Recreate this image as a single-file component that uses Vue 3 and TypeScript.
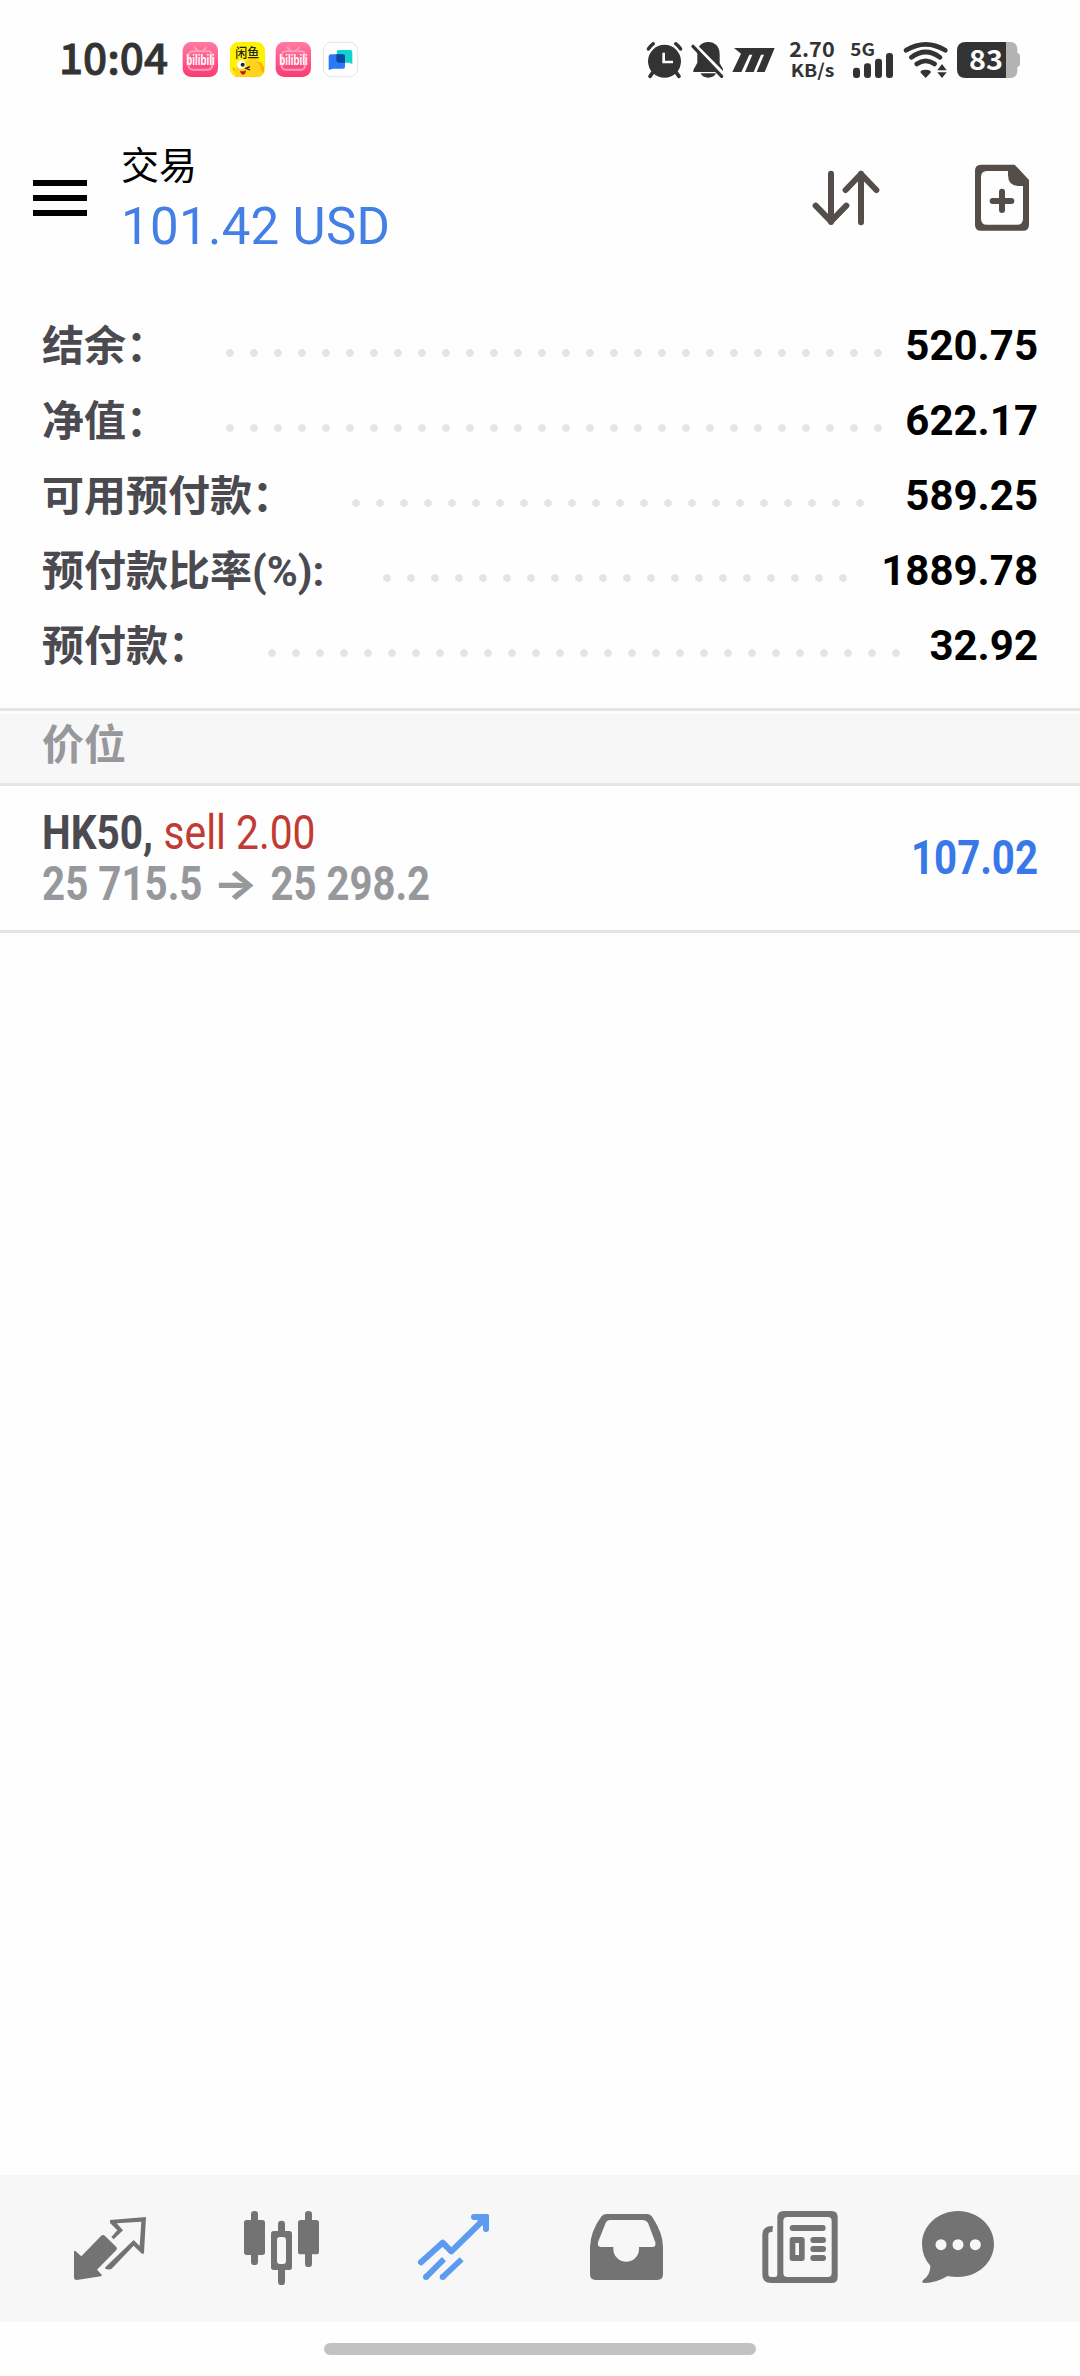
<script setup lang="ts">
interface AccountRow {
  label: string
  value: string
  dotsStart: number
  dots: number
}

const rows: AccountRow[] = [
  { label: '结余：', value: '520.75', dotsStart: 218.4, dots: 28 },
  { label: '净值：', value: '622.17', dotsStart: 218.4, dots: 28 },
  { label: '可用预付款：', value: '589.25', dotsStart: 344.1, dots: 22 },
  { label: '预付款比率(%):', value: '1889.78', dotsStart: 375.2, dots: 20 },
  { label: '预付款：', value: '32.92', dotsStart: 260.2, dots: 27 },
]
</script>

<template>
  <div class="screen">
    <div class="status">
      <svg class="clock" width="120" height="80" viewBox="0 0 120 80">
        <text x="19" y="54.4" textLength="109" lengthAdjust="spacingAndGlyphs" class="time">10:04</text>
      </svg>
      <svg class="apps" width="180" height="80" viewBox="420 0 540 240">
        <defs>
          <linearGradient id="pink" x1="0" y1="0" x2="0" y2="1">
            <stop offset="0" stop-color="#ff7ba2" />
            <stop offset="1" stop-color="#fb3a74" />
          </linearGradient>
        </defs>
        <g v-for="x in [428, 707]" :key="x" :transform="`translate(${x} 66)`">
          <rect width="106" height="105" rx="25" fill="url(#pink)" />
          <g fill="none" stroke="#ff9dba" stroke-width="6" stroke-linecap="round">
            <rect x="18" y="28" width="70" height="55" rx="12" />
            <path d="M36 17l10 10M70 17l-10 10" />
          </g>
          <text x="11" y="70" textLength="85" lengthAdjust="spacingAndGlyphs" class="bili">bilibili</text>
        </g>
        <rect x="570" y="66" width="105" height="105" rx="25" fill="#fff200" />
        <path d="M584 171c-2-30 14-46 38-48 8-12 30-14 36 2 10 4 8 12 14 22v5c0 12-10 19-22 19z" fill="#ffd21c" />
        <path d="M650 127q12 5 14 19t8 10v-14q-8-20-22-15zM578 143q8-2 8 9-8 2-8-9z" fill="#ffae00" />
        <circle cx="604" cy="134" r="13" fill="#fff" />
        <circle cx="608" cy="134" r="6" fill="#222" />
        <path d="M630 140l-12 5 12 5" fill="none" stroke="#222" stroke-width="4" />
        <path d="M600 152q10 4 18-1-1 14-10 13-7-2-8-12z" fill="#b81c16" />
        <text x="586" y="111" textLength="72" lengthAdjust="spacingAndGlyphs" class="fish">闲鱼</text>
        <rect x="850" y="67" width="103" height="103" rx="25" fill="#fff" stroke="#dedede" stroke-width="2.5" />
        <path d="M895 90h36q6 0 6 6v36l-10-4h-26q-10 0-10-8V94q0-4 4-4z" fill="#0fd3d3" />
        <path d="M873 103h36q6 0 6 6v31q0 6-6 6h-30l-13 4v-41q0-6 7-6z" fill="#2b79fb" />
        <path d="M889 103h20q6 0 6 6v19h-16q-10 0-10-8z" fill="#0b469f" />
      </svg>
      <svg class="system" width="400" height="80" viewBox="0 0 1200 240">
        <g fill="#333">
          <path d="M68 158l-8 11M139 158l8 11" stroke="#333" stroke-width="11" stroke-linecap="round" />
          <circle cx="103.500" cy="124" r="49.500" />
          <path d="M55 87q6-9 15-16M152 87q-6-9-15-16" fill="none" stroke="#333" stroke-width="10" stroke-linecap="round" />
          <path d="M101 98v28h28" fill="none" stroke="#fefefe" stroke-width="8" />
          <path d="M208 78q10-12 27-12 34 2 34 39v25l10 17v9H190v-6l12-22V98z" />
          <path d="M212 160h46q-6 13-23 13t-23-13z" />
          <path d="M192 72L284 165" stroke="#fefefe" stroke-width="10" />
          <path d="M189 79L275 169" stroke="#333" stroke-width="10" stroke-linecap="round" />
          <path d="M312 84H434L404 156H380L402 104H393L371 156H345L367 104H358L334 156H307L333 101Z" />
          <rect x="669" y="143" width="21" height="31" rx="9" />
          <rect x="702" y="130" width="21" height="44" rx="9" />
          <rect x="735" y="116" width="21" height="58" rx="9" />
          <rect x="768" y="99" width="21" height="75" rx="9" />
          <g fill="none" stroke="#333" stroke-width="14" stroke-linecap="round">
            <path d="M828 91Q887 55 946 91" />
            <path d="M844 112Q887 80 930 112" />
            <path d="M860 132Q887 113 914 132" />
          </g>
          <path d="M872 153Q887 145 902 153V158L887 174L872 158ZM936 132l14 19H922zM936 174l14-17H922z" />
          <path d="M1128 66h13q21 0 21 23v10q8 2 8 8v26q0 6-8 8v10q0 23-21 23h-13z" fill="#b3b3b3" />
          <path d="M1128 66V174H1007q-26 0-26-26V92q0-26 26-26z" />
        </g>
        <text x="478" y="112" textLength="136" lengthAdjust="spacingAndGlyphs" class="speed">2.70</text>
        <text x="482" y="170" textLength="131" lengthAdjust="spacingAndGlyphs" class="unit">KB/s</text>
        <text x="661" y="107" textLength="74" lengthAdjust="spacingAndGlyphs" class="net">5G</text>
        <text x="1017" y="150" textLength="102" lengthAdjust="spacingAndGlyphs" class="battery">83</text>
      </svg>
    </div>

    <header class="header">
      <div class="menu"><i></i><i></i><i></i></div>
      <div class="titles">
        <div class="title">交易</div>
        <div class="balance">101.42 USD</div>
      </div>
      <svg class="sort" width="72" height="72" viewBox="90 66 216 216">
        <path d="M153 101V246M107 197L153 244L199 197M243 247V101M197 150L243 102L289 150" fill="none" stroke="#554d49" stroke-width="18" stroke-linecap="round" stroke-linejoin="round" />
        <path d="M153 246l-24-24h48zM243 100l-24 24h48z" fill="#554d49" />
      </svg>
      <svg class="new" width="60" height="72" viewBox="576 66 180 216">
        <path fill-rule="evenodd" d="M603 74H704L747 120V254Q747 272 729 272H603Q585 272 585 254V92Q585 74 603 74ZM621 93Q603 93 603 111V236Q603 254 621 254H711Q729 254 729 236V138H714Q684 136 684 105V93Z" fill="#554d49" />
        <path d="M666 155V210M638 183H694" stroke="#554d49" stroke-width="18" stroke-linecap="round" />
      </svg>
    </header>

    <section class="account">
      <div v-for="row in rows" :key="row.label" class="row">
        <span class="label" :style="{ width: row.dotsStart - 42 + 'px' }">{{ row.label }}</span>
        <span class="dots" :style="{ width: row.dots * 24 + 'px' }"></span>
        <span class="value">{{ row.value }}</span>
      </div>
    </section>

    <div class="section-title">价位</div>

    <div class="position">
      <svg width="540" height="144" viewBox="0 786 540 144">
        <text x="42" y="849" textLength="111" lengthAdjust="spacingAndGlyphs" class="bold dark">HK50,</text>
        <text x="163.500" y="849" textLength="152" lengthAdjust="spacingAndGlyphs" class="red">sell 2.00</text>
        <text x="42" y="900" textLength="160.500" lengthAdjust="spacingAndGlyphs" class="bold grey">25 715.5</text>
        <text x="213" y="898" textLength="45" lengthAdjust="spacingAndGlyphs" class="arrow grey">→</text>
        <text x="270.500" y="900" textLength="159.500" lengthAdjust="spacingAndGlyphs" class="bold grey">25 298.2</text>
      </svg>
      <svg width="180" height="144" viewBox="900 786 180 144">
        <text x="911" y="874" textLength="127" lengthAdjust="spacingAndGlyphs" class="bold blue">107.02</text>
      </svg>
    </div>

    <div class="blank"></div>

    <nav class="tabs">
      <svg class="quotes" width="90" height="147" viewBox="75 45 270 441">
        <path d="M102 274q2-3 5 0l17 15 59-61q6-6 12 0l34 33q4 5 0 9l-58 59 14 15q2 4-2 5l-73 11q-8 0-8-8z" fill="#737373" />
        <path fill-rule="evenodd" d="M210 180L318 171L312 278Q310 284 304 280L281 257L215 326Q211 330 196 327V322L281 240L299 258L304 185L230 190L249 211L221 238L214 231L232 211L210 189Z" fill="#737373" />
      </svg>
      <svg class="chart" width="90" height="147" viewBox="588 45 270 441">
        <g fill="#737373">
          <rect x="633" y="153" width="21" height="162" rx="10" />
          <rect x="612" y="180" width="63" height="105" rx="8" />
          <rect x="795" y="153" width="21" height="168" rx="10" />
          <rect x="774" y="180" width="63" height="103" rx="8" />
          <rect x="714" y="182" width="21" height="193" rx="10" />
          <rect x="693" y="213" width="63" height="117" rx="8" />
        </g>
        <rect x="711" y="231" width="27" height="81" rx="9" fill="#f7f7f7" />
      </svg>
      <svg class="trade" width="90" height="147" viewBox="1110 45 270 441">
        <g fill="none" stroke="#5d9bf0" stroke-width="18" stroke-linejoin="round">
          <path d="M1143 307L1208 248L1234 274L1333 177M1302 171H1338V207" stroke-linecap="round" />
        </g>
        <g fill="#5d9bf0">
          <path d="M1302 162h39q6 0 6 6v38l-18-8-18-18z" />
          <circle cx="1158" cy="351" r="9" /><circle cx="1208" cy="351" r="9" />
          <path d="M1151 346L1206 291L1218 304L1164 358ZM1202 345L1259 292L1271 304L1214 358Z" />
        </g>
      </svg>
      <svg class="history" width="90" height="147" viewBox="126 45 270 441">
        <path fill-rule="evenodd" d="M200 162H320Q331 162 337 171Q369 220 369 261V343Q369 360 352 360H167Q150 360 150 343V261Q152 213 183 171Q189 162 200 162ZM211 180Q201 180 197 189L175 244Q170 261 183 261H220V267A38 38 0 0 0 297 267V261H337Q349 261 346 247L325 191Q320 180 307 180Z" fill="#737373" />
      </svg>
      <svg class="news" width="90" height="147" viewBox="645 45 270 441">
        <path fill-rule="evenodd" d="M731 153H875Q893 153 893 171V351Q893 369 875 369H693Q667 369 667 343V224Q667 197 699 198L697 216Q685 214 685 224V342Q685 351 694 351H705Q712 351 712 342V171Q712 153 731 153ZM742 171Q730 171 730 183V339Q730 351 742 351H863Q875 351 875 339V183Q875 171 863 171Z" fill="#737373" />
        <g fill="#737373">
          <rect x="749" y="195" width="108" height="18" rx="9" />
          <rect x="811" y="231" width="47" height="18" rx="9" />
          <rect x="811" y="258" width="47" height="18" rx="9" />
          <rect x="811" y="285" width="47" height="18" rx="9" />
          <path fill-rule="evenodd" d="M757 231H786Q794 231 794 239V295Q794 303 786 303H757Q749 303 749 295V239Q749 231 757 231ZM766 249V285H777V249Z" />
        </g>
      </svg>
      <svg class="chat" width="90" height="147" viewBox="1119 45 270 441">
        <path d="M1254 153C1314 153 1362 198 1362 252S1314 351 1254 351Q1236 351 1223 348Q1186 370 1152 369Q1143 367 1149 361Q1172 343 1171 317Q1146 290 1146 252C1146 198 1194 153 1254 153Z" fill="#737373" />
        <g fill="#f7f7f7">
          <circle cx="1203" cy="254" r="16.500" /><circle cx="1254" cy="254" r="16.500" /><circle cx="1306" cy="254" r="16.500" />
        </g>
      </svg>
    </nav>
    <div class="home"><div class="pill"></div></div>
  </div>
</template>

<style>
body {
  background: #fefefe;
}
</style>

<style scoped>
.screen {
  width: 1080px;
  height: 2376px;
  overflow: hidden;
  display: flex;
  flex-direction: column;
  background: #fefefe;
  font-family: Roboto, "Noto Sans CJK SC", sans-serif;
}
svg {
  display: block;
  flex: none;
}
.status {
  height: 80px;
  padding-top: 20px;
  display: flex;
}
.clock {
  margin-left: 40px;
  overflow: visible;
}
.apps {
  margin-left: 20px;
}
.system {
  margin-left: 270px;
}
.time {
  font: 600 42px "Noto Sans CJK SC", "Noto Sans", sans-serif;
  font-weight: 500;
  fill: #333;
  stroke: #333;
  stroke-width: 0.8px;
}
.bili {
  font: 700 46px "Liberation Sans", sans-serif;
  fill: #fff;
}
.fish {
  font: 500 39px "Noto Sans CJK SC", sans-serif;
  fill: #222;
}
.speed,
.unit,
.net,
.battery {
  font-family: "Noto Sans CJK SC", "Noto Sans", sans-serif;
  font-weight: 700;
  fill: #333;
}
.speed {
  font-size: 62px;
}
.unit {
  font-size: 53px;
}
.net {
  font-size: 53px;
}
.battery {
  font-size: 82px;
  fill: #fefefe;
}
.header {
  height: 200px;
  display: flex;
}
.menu {
  width: 54px;
  margin: 80px 0 0 33px;
}
.menu i {
  display: block;
  height: 6px;
  margin-bottom: 9px;
  background: #000;
}
.titles {
  width: 400px;
  margin-left: 34px;
}
.title {
  margin-top: 39px;
  height: 55px;
  line-height: 54px;
  font-size: 38px;
  color: #000;
}
.balance {
  height: 66px;
  line-height: 66px;
  font-size: 51px;
  letter-spacing: 0.3px;
  color: #437fe4;
  white-space: nowrap;
}
.sort {
  margin: 62px 0 0 289px;
}
.new {
  margin: 62px 0 0 90px;
}
.account {
  height: 375px;
  padding: 8px 42px 25px;
}
.row {
  height: 75px;
  display: flex;
  align-items: center;
  line-height: 75px;
  font-size: 42px;
  font-weight: 700;
}
.label {
  flex: none;
  padding-top: 2px;
  color: #4b4a50;
  white-space: nowrap;
}
.dots {
  flex: none;
  height: 24px;
  margin-top: 15px;
  background: radial-gradient(circle at 12px 12px, #e4e4e4 3.4px, transparent 4.3px) 0 0 / 24px 24px;
}
.value {
  margin-left: auto;
  color: #000;
}
.section-title {
  flex: none;
  height: 69px;
  border-top: 3px solid #e4e4e4;
  border-bottom: 3px solid #e4e4e4;
  box-shadow: inset 0 3px #fefefe;
  padding: 3px 42px 0;
  line-height: 63px;
  font-size: 42px;
  font-weight: 700;
  color: #97989c;
  background: #f7f7f7;
}
.position {
  flex: none;
  height: 144px;
  display: flex;
  justify-content: space-between;
  border-bottom: 3px solid #e4e4e4;
}
.position text {
  font-family: Roboto, sans-serif;
  font-size: 48px;
}
.position .bold {
  font-weight: 700;
}
.position .arrow {
  font-family: Inter, sans-serif;
  font-weight: 800;
  font-size: 40px;
}
.dark {
  fill: #4b4a50;
}
.red {
  fill: #c13b32;
}
.grey {
  fill: #97989c;
}
.blue {
  fill: #3878e8;
}
.blank {
  flex: 1;
}
.tabs {
  flex: none;
  height: 147px;
  display: flex;
  background: #f7f7f7;
}
.quotes {
  margin-left: 65px;
}
.chart {
  margin-left: 81px;
}
.trade {
  margin-left: 84px;
}
.history {
  margin-left: 82px;
}
.news {
  margin-left: 83px;
}
.chat {
  margin-left: 68px;
}
.home {
  flex: none;
  height: 54px;
  display: flex;
  justify-content: center;
}
.pill {
  width: 432px;
  height: 12px;
  margin-top: 21px;
  border-radius: 6px;
  background: #c2c2c2;
}
</style>
